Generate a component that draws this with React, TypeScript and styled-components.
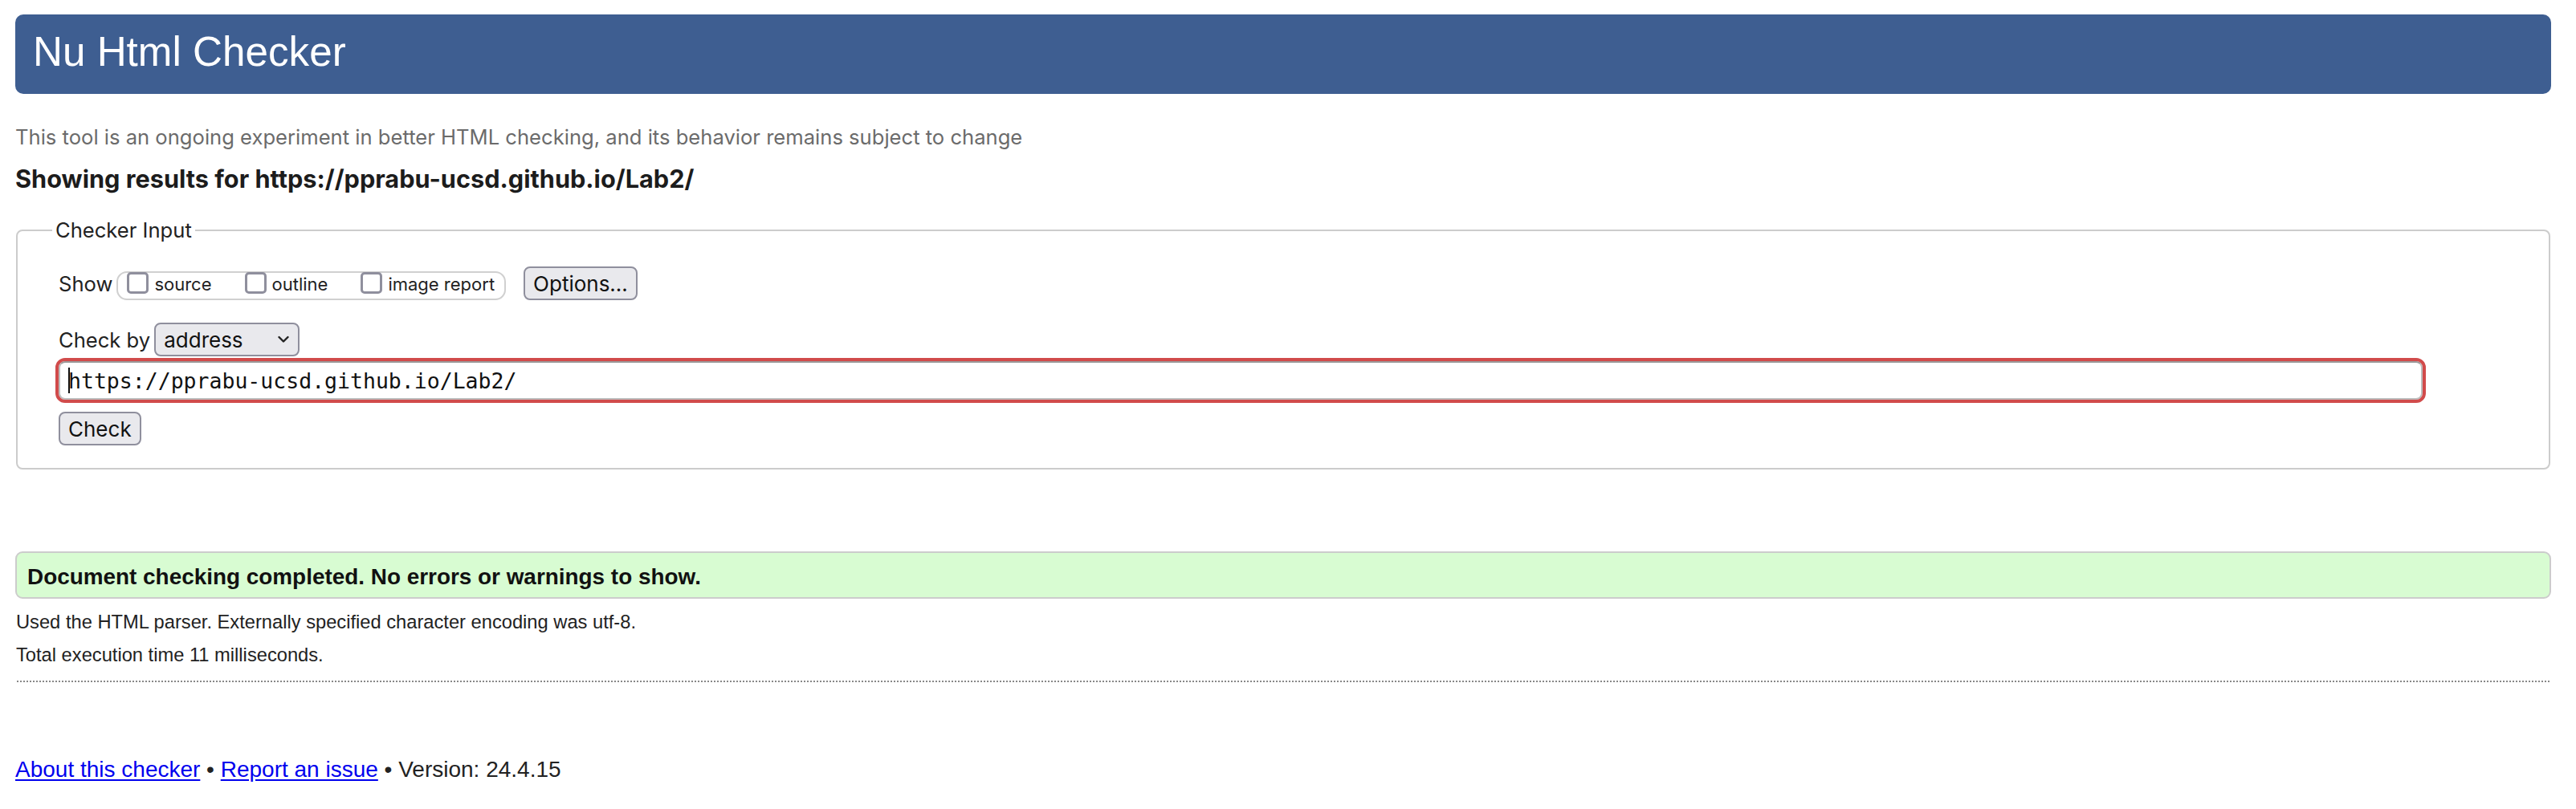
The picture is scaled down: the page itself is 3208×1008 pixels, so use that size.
import React from "react";
import styled, { createGlobalStyle } from "styled-components";

const GlobalStyle = createGlobalStyle`
  html, body {
    margin: 0;
    padding: 0;
    background: #ffffff;
  }
  body {
    font-family: Inter, "Liberation Sans", Arial, sans-serif;
    color: #222222;
  }
`;

const Page = styled.div`
  padding: 18px 31px 0 19px;
`;

const Header = styled.header`
  height: 99px;
  box-sizing: border-box;
  background: #3e5e91;
  border-radius: 10px;
  display: flex;
  align-items: center;
  padding: 0 0 6px 22px;
`;

const Title = styled.h1`
  margin: 0;
  font-family: "Liberation Sans", Arial, sans-serif;
  font-weight: 400;
  font-size: 51.2px;
  color: #ffffff;
  line-height: normal;
`;

const Intro = styled.p`
  margin: 39px 0 0 0;
  font-size: 25.6px;
  line-height: 30px;
  color: #6b6b6b;
`;

const ResultsFor = styled.h2`
  margin: 20px 0 0 0;
  font-size: 30.7px;
  line-height: 34px;
  font-weight: 700;
  color: #1c1c1c;
`;

const Fieldset = styled.fieldset`
  margin: 32px 1px 0 1px;
  padding: 0 51px 28px 51px;
  border: 2px solid #cccccc;
  border-radius: 8px;
  min-width: 0;
`;

const Legend = styled.legend`
  margin-left: -8px;
  padding: 0 4px;
  font-size: 25.6px;
  line-height: 30px;
  color: #222222;
`;

const ControlRow = styled.div<{ $top: number }>`
  display: flex;
  align-items: flex-end;
  height: 42px;
  margin-top: ${(p) => p.$top}px;
`;

const RowLabel = styled.span`
  font-size: 25.6px;
  line-height: 30px;
  padding-bottom: 5px;
  margin-right: 5px;
  color: #222222;
`;

const OptionGroup = styled.div`
  display: inline-flex;
  align-items: center;
  height: 36px;
  box-sizing: border-box;
  border: 2px solid #d0d0d0;
  border-radius: 13px;
  padding: 0 12px 0 11px;
  gap: 41px;
`;

const OptionItem = styled.label`
  display: inline-flex;
  align-items: center;
  gap: 7px;
`;

const CheckBox = styled.span`
  display: inline-block;
  width: 27px;
  height: 27px;
  box-sizing: border-box;
  border: 3px solid #8f8f9d;
  border-radius: 5px;
  background: #ffffff;
  margin-bottom: 7px;
`;

const OptionText = styled.span`
  font-size: 22px;
  line-height: 28px;
  margin-bottom: 4px;
  color: #222222;
`;

const Button = styled.button<{ $left?: number }>`
  height: 42px;
  box-sizing: border-box;
  margin: 0 0 0 ${(p) => p.$left ?? 0}px;
  padding: 0 10px;
  font-family: Inter, "Liberation Sans", Arial, sans-serif;
  font-size: 26px;
  line-height: 31px;
  color: #111111;
  background: #e9e9ed;
  border: 2px solid #8f8f9d;
  border-radius: 8px;
  display: inline-flex;
  align-items: center;
`;

const SelectBox = styled.div`
  width: 181px;
  height: 42px;
  box-sizing: border-box;
  display: flex;
  align-items: center;
  justify-content: space-between;
  padding: 0 11px 0 10px;
  background: #e9e9ed;
  border: 2px solid #8f8f9d;
  border-radius: 8px;
  font-size: 26px;
  color: #111111;
`;

const UrlField = styled.div`
  margin-top: 6px;
  width: 2944px;
  height: 48px;
  box-sizing: border-box;
  display: flex;
  align-items: center;
  padding: 0 10px;
  border: 2px solid #bdbdbd;
  border-top-color: #9a9a9a;
  border-radius: 8px;
  outline: 4px solid #d14b4b;
  outline-offset: 0;
  font-family: "DejaVu Sans Mono", "Liberation Mono", monospace;
  font-size: 26.5px;
  color: #111111;
  background: #ffffff;
`;

const Caret = styled.span`
  display: inline-block;
  width: 2px;
  height: 32px;
  background: #111111;
  margin-right: -2px;
`;

const CheckButtonWrap = styled.div`
  margin-top: 15px;
  display: flex;
`;

const Success = styled.div`
  margin-top: 102px;
  height: 59px;
  box-sizing: border-box;
  border: 2px solid #cccccc;
  border-radius: 9px;
  background: #d8fcd2;
  padding: 15px 13px 0 13px;
  font-family: "Liberation Sans", Arial, sans-serif;
  font-size: 27.9px;
  line-height: 30px;
  font-weight: 700;
  color: #111111;
`;

const Info = styled.p<{ $top: number }>`
  margin: ${(p) => p.$top}px 0 0 1px;
  font-family: "Liberation Sans", Arial, sans-serif;
  font-size: 23.7px;
  line-height: 30px;
  color: #222222;
`;

const Divider = styled.hr`
  margin: 17px 2px 0 2px;
  border: 0;
  border-top: 2px dotted #888888;
  height: 0;
`;

const Footer = styled.p`
  margin: 94px 0 0 0;
  font-family: "Liberation Sans", Arial, sans-serif;
  font-size: 28px;
  line-height: 30px;
  color: #222222;
`;

const FooterLink = styled.a`
  color: #0000ee;
  text-decoration: underline;
  text-underline-offset: 3px;
`;

const Chevron = () => (
  <svg width="14" height="10" viewBox="0 0 14 10" aria-hidden="true">
    <path d="M1.5 2 L7 7.5 L12.5 2" fill="none" stroke="#222" strokeWidth="2.4" strokeLinecap="round" strokeLinejoin="round" />
  </svg>
);

const options = ["source", "outline", "image report"];

export default function App() {
  return (
    <>
      <GlobalStyle />
      <Page>
        <Header>
          <Title>Nu Html Checker</Title>
        </Header>
        <Intro>
          This tool is an ongoing experiment in better HTML checking, and its behavior remains subject to change
        </Intro>
        <ResultsFor>Showing results for https://pprabu-ucsd.github.io/Lab2/</ResultsFor>
        <Fieldset>
          <Legend>Checker Input</Legend>
          <ControlRow $top={30}>
            <RowLabel>Show</RowLabel>
            <OptionGroup>
              {options.map((o) => (
                <OptionItem key={o}>
                  <CheckBox />
                  <OptionText>{o}</OptionText>
                </OptionItem>
              ))}
            </OptionGroup>
            <Button $left={22}>Options...</Button>
          </ControlRow>
          <ControlRow $top={28}>
            <RowLabel>Check by</RowLabel>
            <SelectBox>
              <span>address</span>
              <Chevron />
            </SelectBox>
          </ControlRow>
          <UrlField>
            <Caret />
            <span>https://pprabu-ucsd.github.io/Lab2/</span>
          </UrlField>
          <CheckButtonWrap>
            <Button>Check</Button>
          </CheckButtonWrap>
        </Fieldset>
        <Success>Document checking completed. No errors or warnings to show.</Success>
        <Info $top={14}>Used the HTML parser. Externally specified character encoding was utf-8.</Info>
        <Info $top={11}>Total execution time 11 milliseconds.</Info>
        <Divider />
        <Footer>
          <FooterLink href="#">About this checker</FooterLink> • <FooterLink href="#">Report an issue</FooterLink> • Version: 24.4.15
        </Footer>
      </Page>
    </>
  );
}
